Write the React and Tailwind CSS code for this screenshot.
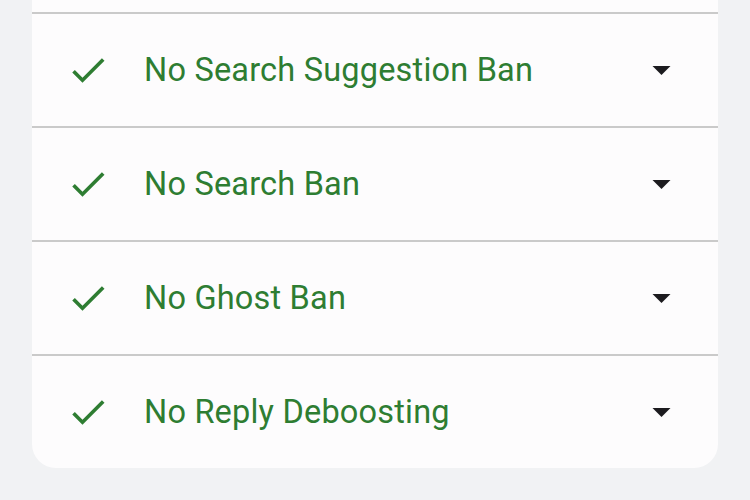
import React from 'react';

const checks = [
  'No Search Suggestion Ban',
  'No Search Ban',
  'No Ghost Ban',
  'No Reply Deboosting',
];

const CheckIcon = () => (
  <svg viewBox="0 0 24 24" className="w-[44px] h-[44px] shrink-0" fill="#2e7d32">
    <path d="M9 16.17L4.83 12l-1.42 1.41L9 19 21 7l-1.41-1.41z" />
  </svg>
);

const DropIcon = () => (
  <svg viewBox="0 0 20 10" className="w-[19px] h-[9px] shrink-0" fill="#1c1b1f">
    <path d="M0 0h20L10 10z" />
  </svg>
);

export default function App() {
  return (
    <div className="w-[750px] h-[500px] bg-[#f1f2f4] overflow-hidden" style={{ fontFamily: 'Roboto, "Noto Sans", sans-serif' }}>
      <div className="ml-[32px] w-[686px] bg-[#fdfcfd] rounded-b-[24px] pt-[12px]">
        {checks.map((label) => (
          <div key={label} className="h-[114px] border-t-2 border-[#cacaca] flex items-center pl-[34px] pr-[47px]">
            <CheckIcon />
            <span className="ml-[34px] flex-1 text-[32.5px] tracking-[0.2px] text-[#2e7d32] leading-none">{label}</span>
            <DropIcon />
          </div>
        ))}
      </div>
    </div>
  );
}
